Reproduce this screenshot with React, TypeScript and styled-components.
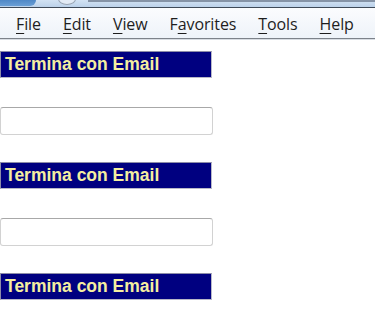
import styled, { createGlobalStyle } from 'styled-components';

const GlobalStyle = createGlobalStyle`
  html, body {
    margin: 0;
    padding: 0;
    background: #ffffff;
  }
  body {
    font-family: "Liberation Sans", Arial, sans-serif;
  }
`;

const menuItems = [
  { key: 'F', rest: 'ile' },
  { key: 'E', rest: 'dit' },
  { key: 'V', rest: 'iew' },
  { key: 'Fa', rest: 'vorites', under: 1 },
  { key: 'T', rest: 'ools' },
  { key: 'H', rest: 'elp' },
];

const App = () => {
  return (
    <>
      <GlobalStyle />
      <Window>
        <TitleStrip>
          <TabEdge />
          <TabBump />
          <TabBand />
        </TitleStrip>
        <MenuBar>
          {menuItems.map((item) => (
            <MenuItem key={item.key + item.rest}>
              {item.under ? (
                <>
                  {item.key[0]}
                  <u>{item.key[1]}</u>
                </>
              ) : (
                <u>{item.key}</u>
              )}
              {item.rest}
            </MenuItem>
          ))}
        </MenuBar>
        <Content>
          <Label>Termina con Email</Label>
          <EmailInput />
          <Label>Termina con Email</Label>
          <EmailInput />
          <Label>Termina con Email</Label>
        </Content>
      </Window>
    </>
  );
};

export default App;

const Window = styled.div`
  width: 375px;
  height: 331px;
  overflow: hidden;
  background: #ffffff;
`;

const TitleStrip = styled.div`
  position: relative;
  height: 7px;
  background: linear-gradient(#d2e2f3, #bcd2ea);
  border-bottom: 1px solid #3f4a58;
  overflow: hidden;
`;

const TabEdge = styled.div`
  position: absolute;
  left: 0;
  top: 0;
  width: 36px;
  height: 6px;
  background: linear-gradient(#4f88c6, #6a9fd6);
  border-bottom-right-radius: 12px;
`;

const TabBump = styled.div`
  position: absolute;
  left: 58px;
  top: -7px;
  width: 16px;
  height: 10px;
  border: 1px solid #9aa6b5;
  border-radius: 50%;
  background: #e3ebf5;
`;

const TabBand = styled.div`
  position: absolute;
  left: 88px;
  right: 0;
  top: 0;
  height: 2px;
  background: #8593a6;
`;

const MenuBar = styled.div`
  display: flex;
  align-items: center;
  height: 29px;
  padding-left: 16px;
  padding-top: 1px;
  background: linear-gradient(#fbfcfe, #eef3f9);
  border-bottom: 1px solid #7c828a;
  box-shadow: 0 1px 0 #d8dde3;
`;

const MenuItem = styled.span`
  font-family: "Open Sans", "Noto Sans", sans-serif;
  font-size: 16px;
  color: #1e1e1e;
  margin-right: 22px;
  letter-spacing: -0.1px;

  u {
    text-decoration-thickness: 1px;
    text-underline-offset: 3px;
  }
`;

const Content = styled.div`
  display: flex;
  flex-direction: column;
  align-items: flex-start;
  padding-top: 12px;
`;

const Label = styled.div`
  box-sizing: border-box;
  width: 212px;
  height: 27px;
  padding-left: 4px;
  background: #000080;
  color: #f4eea0;
  font-family: "Liberation Sans", Arial, sans-serif;
  font-size: 17.5px;
  font-weight: bold;
  line-height: 25px;
  border: 1px solid #8d8da8;
  border-right-color: #b8b8c8;
  border-bottom-color: #b8b8c8;
  margin-bottom: 29px;
`;

const EmailInput = styled.input`
  box-sizing: border-box;
  width: 213px;
  height: 28px;
  margin: 0 0 27px 0;
  padding: 0;
  border: 1px solid #d2d2d2;
  border-top-color: #a8a8a8;
  border-radius: 3px;
  background: #ffffff;
  outline: none;
`;
